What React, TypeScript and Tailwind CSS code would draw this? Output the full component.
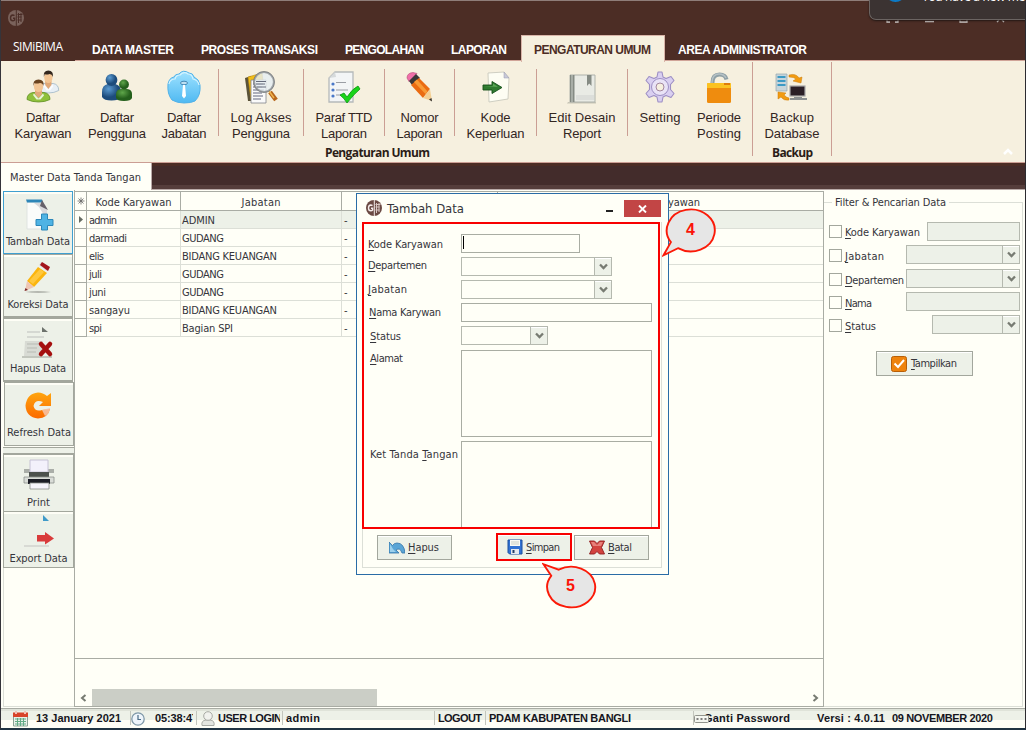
import { useLayoutEffect, useRef, type ReactNode } from "react";

const UI = "font-['DejaVu_Sans_Condensed','DejaVu_Sans',sans-serif] [font-stretch:condensed]";
const ARIAL = "font-['Liberation_Sans',Arial,sans-serif]";
const HUMANIST = "font-['Open_Sans',sans-serif] [font-stretch:normal]";

/* Text run whose tracking is adjusted so that it fills the given width. */
function Fit({ w, className = "", children }: { w: number; className?: string; children: ReactNode }) {
  const ref = useRef<HTMLSpanElement>(null);
  useLayoutEffect(() => {
    const el = ref.current;
    if (!el) return;
    const n = (el.textContent || "").length;
    el.style.letterSpacing = "0px";
    el.style.width = "auto";
    const natural = el.getBoundingClientRect().width;
    el.style.letterSpacing = `${(w - natural) / Math.max(1, n - 1)}px`;
    el.style.width = `${w}px`;
  }, [w]);
  return (
    <span ref={ref} className={`inline-block shrink-0 whitespace-pre ${className}`}>
      {children}
    </span>
  );
}

/* Label with its first letter underlined as the keyboard mnemonic. */
function Mnemonic({ text, w, className = "" }: { text: string; w: number; className?: string }) {
  return (
    <Fit w={w} className={className}>
      <span className="underline decoration-1 underline-offset-2">{text[0]}</span>
      {text.slice(1)}
    </Fit>
  );
}

const Logo = ({ dim = false, size = 16 }: { dim?: boolean; size?: number }) => (
  <svg width={size} height={size} viewBox="0 0 16 16">
    <circle cx="8" cy="8" r="8" fill={dim ? "#7a625b" : "#6b4a44"} />
    <path d="M6.500 5.600Q5.800 5 4.800 5 2.500 5.200 2.500 8T4.800 10.800Q6 10.800 6.600 10V8.200H5" fill="none" stroke={dim ? "#4a2d26" : "#f4ecea"} strokeWidth="1.400" />
    <path d="M8.300 0V16" stroke={dim ? "#4a2d26" : "#f4ecea"} strokeWidth="1" />
    <path d="M9.500 4.500h5M9.500 7h4M10.500 3v10M13 3v9M9.500 10h4" fill="none" stroke={dim ? "#4a2d26" : "#d9c8c4"} strokeWidth="1" />
  </svg>
);

function Person({ hair, shirt, edge }: { hair: string; shirt: string; edge: string }) {
  return (
    <g>
      <path d="M0 19.500Q0 13.500 6 12.500H17Q23 13.500 23 19.500Q18 22 11.500 22T0 19.500Z" fill={shirt} stroke={edge} strokeWidth=".8" />
      <path d="M8 10h7v4l-3.500 4L8 14Z" fill="#e0a878" />
      <path d="M7 13.500l4.500 5 4.500-5 1 2-3.500 4h-4L6 15Z" fill="#fff" opacity=".8" />
      <ellipse cx="11.500" cy="6.500" rx="4.600" ry="5.500" fill="#f3c594" />
      <path d="M6.500 6Q5.500-.5 11.500-.5T16.500 6Q15.500 3 13 3 9 4 7.500 3Z" fill={hair} />
    </g>
  );
}

const IcKaryawan = () => (
  <svg width="34" height="34" viewBox="0 0 34 34">
    <g transform="translate(12 1)"><g transform="scale(.9 1)"><Person hair="#33271d" shirt="#e8eff5" edge="#9bb2c4" /></g></g>
    <g transform="translate(1 10)"><Person hair="#6b4420" shirt="#8fc13c" edge="#5f8f22" /></g>
  </svg>
);
const IcPengguna = () => (
  <svg width="34" height="34" viewBox="0 0 34 34">
    <defs>
      <radialGradient id="ub" cx=".35" cy=".3"><stop offset="0" stopColor="#5b9bd2" /><stop offset="1" stopColor="#1d4c7c" /></radialGradient>
      <radialGradient id="ug" cx=".4" cy=".3"><stop offset="0" stopColor="#5fa64a" /><stop offset="1" stopColor="#245f1c" /></radialGradient>
    </defs>
    <path d="M2 22Q2 15 8 14h7Q21 15 21 22V27Q19 30.500 11.500 30.500T2 27Z" fill="url(#ub)" />
    <circle cx="11.500" cy="10" r="5.900" fill="url(#ub)" />
    <path d="M16 24Q16 19.500 21 19h6Q32 19.500 32 24v4Q31 31 24 31T16 28Z" fill="url(#ug)" />
    <circle cx="24" cy="14.500" r="4.900" fill="url(#ug)" />
  </svg>
);
const IcJabatan = () => (
  <svg width="34" height="34" viewBox="0 0 34 34">
    <defs><linearGradient id="cl" x1="0" y1="0" x2="0" y2="1"><stop offset="0" stopColor="#9fe2ff" /><stop offset="1" stopColor="#4fb9f2" /></linearGradient></defs>
    <path d="M5 30Q0 24 1 14Q2 8 7 7Q8 4 12 4Q16-1 22 3Q26 3 27 7Q32 9 33 15Q34 25 28 31Q24 33 17 33T5 30Z" fill="url(#cl)" stroke="#53b2e8" strokeWidth="1" />
    <path d="M2 14Q3 9 8 9Q9 5 13 5Q17 1 21 4Q25 4 26 9Q31 10 32 15" fill="none" stroke="#d4f3ff" strokeWidth="1.200" />
    <ellipse cx="17" cy="13" rx="3.500" ry="1.800" fill="#bcdff2" stroke="#397fae" strokeWidth=".9" />
    <path d="M16 15h2L19 26l-2 2.500-2-2.500Z" fill="#fff" />
  </svg>
);
const IcLog = () => (
  <svg width="34" height="34" viewBox="0 0 34 34">
    <path d="M1 8l6-2v25H4Z" fill="#5a5238" /><path d="M4 7l14-4 3 24-14 3Z" fill="#f2bd17" stroke="#b88a10" strokeWidth=".6" />
    <path d="M7 10h15v23H7Z" fill="#fafafa" stroke="#80848a" strokeWidth=".8" />
    <path d="M9 14h10M9 17h9M9 20h11M9 23h9M9 26h10M9 29h8" stroke="#62677f" strokeWidth="1.100" />
    <path d="M26 22l6 8" stroke="#b7651c" strokeWidth="4.500" /><path d="M25 21l5 7" stroke="#efb44e" strokeWidth="1.500" />
    <circle cx="20" cy="12" r="9.800" fill="#e5edf3" fillOpacity=".8" stroke="#a0a5a8" strokeWidth="1.800" />
    <path d="M12 14h9M12 11.500h10M13 17h9" stroke="#666c7c" />
    <circle cx="20" cy="12" r="10.500" fill="none" stroke="#57595c" strokeWidth=".5" />
  </svg>
);
const IcParaf = () => (
  <svg width="34" height="34" viewBox="0 0 34 34">
    <path d="M8 2H26V32H2V8Z" fill="#f3f5f6" stroke="#b5b9ba" strokeWidth="1.300" /><path d="M2 8l7-1-1-5Z" fill="#d6dadb" />
    <g fill="#4a78c8"><circle cx="6" cy="14" r="1.600" /><circle cx="6" cy="20" r="1.600" /><circle cx="6" cy="26" r="1.600" /></g>
    <path d="M9 12.500h10M9 20h12M9 25h6" stroke="#9a9ea4" strokeWidth="1.200" />
    <path d="M13 25l4-2 3 4Q25 19 31 16l2 3Q27 24 20 33Q17 28 13 25Z" fill="#19d419" stroke="#0b9412" strokeWidth=".8" />
  </svg>
);
const IcNomor = () => (
  <svg width="34" height="34" viewBox="0 0 34 34">
    <path d="M4 8Q4 3 10 2.500l4 1-8 8Z" fill="#ef6fa8" stroke="#b64477" strokeWidth=".6" />
    <path d="M13 4l4 4-8 7-3-4Z" fill="#3a3738" />
    <path d="M16 8l11 11-7 9L8 15Z" fill="#ea6b12" /><path d="M14 9.500l10.500 12-2 2.500L11 12Z" fill="#f89a35" />
    <path d="M20 28l7-9 2 12Z" fill="#f3cf94" /><path d="M26 29.500l2.500-1.500.5 3.500Z" fill="#333" />
  </svg>
);
const IcKode = () => (
  <svg width="34" height="34" viewBox="0 0 34 34">
    <path d="M9 3l16-1 5 6-1 21-19 3Z" fill="#fdfdf3" stroke="#c9c9bd" strokeWidth=".9" /><path d="M25 2l0 6 5 0Z" fill="#c8c9d8" stroke="#9a9ab0" strokeWidth=".5" />
    <path d="M4 15h9v-3.500l10 6-10 6v-3.500H4Z" fill="#2f7a2f" stroke="#144f18" strokeWidth=".9" /><path d="M5 16h9v-2.500l5 3.500Z" fill="#5aa655" />
  </svg>
);
const IcEdit = () => (
  <svg width="34" height="34" viewBox="0 0 34 34">
    <path d="M3 32h28v1.500H2Z" fill="#c7c5b6" />
    <path d="M5 5h25v27H5Z" fill="#e9ebe5" stroke="#aeb2ab" /><path d="M5 5h4.500v27H5Z" fill="#858b84" /><path d="M7 5v27" stroke="#cbd0ca" />
    <path d="M11 25h18v5H11Z" fill="#dcdeda" /><path d="M22 5h4.500v11l-2.300-2.500L22 16Z" fill="#858b84" />
  </svg>
);
const IcSetting = () => (
  <svg width="34" height="34" viewBox="0 0 34 34">
    <path d="M15 2h4l1 5 3 1.500 5-2 3 4-3.500 4v5l3.500 4-3 4-5-2-3 1.500-1 5h-4l-1-5-3-1.500-5 2-3-4 3.500-4v-5L3 10.500l3-4 5 2L14 7Z" fill="#d9cff0" stroke="#9d8fc4" strokeWidth="1.100" strokeLinejoin="round" />
    <circle cx="17" cy="17" r="8.500" fill="#e9e3f6" stroke="#9d8fc4" /><circle cx="17" cy="17" r="4" fill="#f6f0df" stroke="#a4889f" />
  </svg>
);
const IcPeriode = () => (
  <svg width="34" height="34" viewBox="0 0 34 34">
    <path d="M10.500 14V12.500Q10.500 4.500 17.500 4.500 23.500 4.500 24.500 9.500" fill="none" stroke="#8fa0a6" strokeWidth="4" /><path d="M10 13V12Q10.500 4 17 4 22 4 24 8" fill="none" stroke="#b5c1c5" strokeWidth="1.500" />
    <rect x="5" y="13" width="24" height="20" rx="1.500" fill="#ef8c0e" /><path d="M5 14Q5 13 6 13H28Q29 13 29 14v4H5Z" fill="#fbc221" /><path d="M22 13h6v2h-6Z" fill="#e07c08" />
  </svg>
);
const IcBackup = () => (
  <svg width="34" height="34" viewBox="0 0 34 34">
    <path d="M1 4h11v17H1Z" fill="#c7d5da" stroke="#97a7ac" strokeWidth=".7" />
    <path d="M2.500 7h8M2.500 11h8M2.500 15h8" stroke="#3c9ac4" strokeWidth="1.800" />
    <path d="M14 5Q21 3 24 8l3-1-1 6-8-2 3-2Q19 7 14 7Z" fill="#f29b11" stroke="#c97a08" strokeWidth=".5" />
    <rect x="15" y="16" width="15" height="10" fill="#2b1f26" stroke="#a8a8a8" strokeWidth="1.200" /><path d="M19 27h8v1h5v2H15v-2h4Z" fill="#8d9192" />
    <path d="M3 22l8 1-2 2q3 3 5 3v2Q9 31 6 27l-3 2Z" fill="#f29b11" stroke="#c97a08" strokeWidth=".5" />
  </svg>
);

type Tool = { icon: ReactNode; lines: [string, number][]; box: string };
function RibbonItem({ icon, lines, box }: Tool) {
  return (
    <div className={`flex shrink-0 flex-col items-center pt-[9px] ${box}`}>
      {icon}
      <div className={`mt-[6px] flex flex-col items-center text-[13px] leading-4 text-[#33261f] ${ARIAL}`}>
        {lines.map(([t, w]) => <Fit key={t} w={w}>{t}</Fit>)}
      </div>
    </div>
  );
}
const Sep = () => <div className="mt-2 h-[67px] w-px shrink-0 bg-[#cb9e94]" />;
const TallSep = () => <div className="mt-px h-[94px] w-px shrink-0 bg-[#cb9e94]" />;

function Ribbon() {
  return (
    <div className="relative flex h-[101px] shrink-0 bg-[#f6f0df]">
      <RibbonItem box="ml-[5px] w-[74px]" icon={<IcKaryawan />} lines={[["Daftar", 34], ["Karyawan", 57]]} />
      <RibbonItem box="w-[74px]" icon={<IcPengguna />} lines={[["Daftar", 34], ["Pengguna", 58]]} />
      <RibbonItem box="mr-1 w-[60px]" icon={<IcJabatan />} lines={[["Daftar", 34], ["Jabatan", 45]]} />
      <Sep />
      <RibbonItem box="w-[84px]" icon={<IcLog />} lines={[["Log Akses", 61], ["Pengguna", 58]]} />
      <Sep />
      <RibbonItem box="w-[80px]" icon={<IcParaf />} lines={[["Paraf TTD", 57], ["Laporan", 46]]} />
      <Sep />
      <RibbonItem box="w-[69px]" icon={<IcNomor />} lines={[["Nomor", 38], ["Laporan", 46]]} />
      <Sep />
      <RibbonItem box="w-[81px]" icon={<IcKode />} lines={[["Kode", 30], ["Keperluan", 58]]} />
      <Sep />
      <RibbonItem box="w-[90px]" icon={<IcEdit />} lines={[["Edit Desain", 67], ["Report", 38]]} />
      <Sep />
      <RibbonItem box="w-[64px]" icon={<IcSetting />} lines={[["Setting", 41]]} />
      <RibbonItem box="mr-[6px] w-[54px]" icon={<IcPeriode />} lines={[["Periode", 44], ["Posting", 44]]} />
      <TallSep />
      <RibbonItem box="w-[78px]" icon={<IcBackup />} lines={[["Backup", 44], ["Database", 55]]} />
      <TallSep />
      <div className={`absolute left-[324px] top-[84px] text-[12px] font-bold leading-4 text-[#2b1d17] ${HUMANIST}`}><Fit w={105}>Pengaturan Umum</Fit></div>
      <div className={`absolute left-[771px] top-[84px] text-[12px] font-bold leading-4 text-[#2b1d17] ${HUMANIST}`}><Fit w={41}>Backup</Fit></div>
      <svg className="absolute left-[1001px] top-[86px]" width="12" height="9" viewBox="0 0 12 9"><path d="M2 7l4-4 4 4" fill="none" stroke="#fff" strokeWidth="2.500" /></svg>
    </div>
  );
}

function Header() {
  return (
    <div className="relative flex h-[60px] shrink-0 flex-col border-t border-[#8f7d79] bg-[#4c2d25]">
      <div className="flex h-[34px] pl-[7px] pt-[9px]"><Logo dim /></div>
      <div className={`flex h-[25px] items-start text-[12px] font-bold text-white ${ARIAL}`}>
        <Fit w={50} className={`ml-[12px] mt-[4px] text-[12px] font-normal leading-4 ${HUMANIST}`}>SIMiBIMA</Fit>
        <div className="ml-[29px] mt-[7px] flex gap-[27px] leading-4">
          <Fit w={82}>DATA MASTER</Fit><Fit w={117}>PROSES TRANSAKSI</Fit><Fit w={79}>PENGOLAHAN</Fit><Fit w={56}>LAPORAN</Fit>
        </div>
        <div className="relative z-10 ml-[14px] h-[27px] w-[144px] shrink-0 border border-b-0 border-[#d9b5a9] bg-[#f6f0df] pl-[12px] pt-[6px] leading-4 text-[#4c2d25]"><Fit w={117}>PENGATURAN UMUM</Fit></div>
        <Fit w={129} className="ml-[13px] mt-[7px] leading-4">AREA ADMINISTRATOR</Fit>
      </div>
      <div className="absolute right-0 top-[18px] flex w-[144px] gap-[28px] pl-[5px] text-white">
        <svg width="120" height="5" viewBox="0 0 120 5"><path d="M1 1v2h3M9 3h3V1M39 2.500h9M74 1v2h7V1M111 3l2-2M118 3l-2-2" fill="none" stroke="#d9d4d2" strokeWidth="1.300" /></svg>
      </div>
      <div className="absolute -right-[1px] -top-[1px] h-[20px] w-[157px] overflow-hidden rounded-bl-[7px] border-b border-l border-[#6b6462] bg-[#3b3332] shadow-[0_1px_2px_#221815]">
        <div className="absolute left-[15px] top-[-19px] h-[21px] w-[21px] rounded-full bg-[#0c7ac6]" />
        <div className={`absolute left-[52px] top-[-11px] text-[12px] leading-4 text-white ${HUMANIST}`}><Fit w={133}>You have a new message</Fit></div>
      </div>
    </div>
  );
}

const IcTambah = () => (
  <svg width="32" height="34" viewBox="0 0 32 34">
    <path d="M5 4H20l4 7V31H5Z" fill="#fbfcfa" stroke="#dfe3e1" /><path d="M4 1.500H20l1 3H5Z" fill="#2e86b8" /><path d="M12 5h8l5 7v10L17 9Z" fill="#d9d9dc" /><path d="M20 2l6 10-8-4Z" fill="#66616a" />
    <path d="M19.500 16h6v5.500H31v6h-5.500V32h-6v-4.500H14v-6h5.500Z" fill="#4fb3e4" stroke="#2c87b9" />
  </svg>
);
const IcKoreksi = () => (
  <svg width="32" height="34" viewBox="0 0 32 34">
    <path d="M3 31q12-2 26 0-12 2-26 0Z" fill="#b5b8b0" /><path d="M17 4l8 6 2-4-8-5Z" fill="#d9d9de" /><path d="M20 1l8 5-2 4-8-6Z" fill="#a3141c" />
    <path d="M16 6l9 6L12 26 5 20Z" fill="#fbb50e" /><path d="M18 8l4 3L11 23l-4-3Z" fill="#ffc83e" /><path d="M5 20l7 6-9 4Z" fill="#eec6b3" /><path d="M3.500 27l2.500 2-3.500 1Z" fill="#7a2727" />
  </svg>
);
const IcHapus = () => (
  <svg width="32" height="34" viewBox="0 0 32 34">
    <path d="M20 2v5h6Z" fill="#6d726c" /><path d="M5 7h13M5 12h17" stroke="#cdd0ca" strokeWidth="1.500" />
    <path d="M3 16h18v15H2Z" fill="#d8dbd4" /><path d="M5 19h14M5 23h10M5 27h9" stroke="#b8bbb4" /><path d="M0 32h30" stroke="#b3b7af" strokeWidth="1.500" />
    <path d="M19 19l9 10M28 19L19 29" stroke="#a5100f" strokeWidth="4.500" strokeLinecap="round" />
  </svg>
);
const IcRefresh = () => (
  <svg width="32" height="34" viewBox="0 0 32 34">
    <defs><linearGradient id="rf" x1="0" y1="0" x2="0" y2="1"><stop offset="0" stopColor="#ffa50f" /><stop offset="1" stopColor="#fb6a00" /></linearGradient></defs>
    <path d="M28 4v13H16l4-4Q12 10 10.500 17 12 23 19 21L27 20Q25 29 15 29.500 3 28 2.500 16.500 4 4.500 15 3.500 20 3.500 24 7Z" fill="url(#rf)" />
    <path d="M19 21l8-2Q27 24 22 27Z" fill="#f6c5ae" opacity=".85" />
  </svg>
);
const IcPrint = () => (
  <svg width="32" height="32" viewBox="0 0 32 32">
    <path d="M1 10h30v4H1Z" fill="#aaaea8" /><path d="M7 1h18v12H7Z" fill="#f3f1fb" stroke="#c6c2d5" /><path d="M6 13h20v5H6Z" fill="#4c514d" />
    <path d="M1 18h30v6H1Z" fill="#d9dcd7" stroke="#8b908b" strokeWidth=".8" /><path d="M5 20h22v5H5Z" fill="#1b1d26" /><path d="M7 24h19v6H7Z" fill="#f5f4fc" stroke="#8b908b" strokeWidth=".8" />
  </svg>
);
const IcExport = () => (
  <svg width="32" height="34" viewBox="0 0 32 34">
    <path d="M20 1v6h6Z" fill="#3f9ac9" /><path d="M1 32h25" stroke="#c9ccc6" strokeWidth="1.200" /><path d="M14 21h8v-3l9 6.500-9 6v-3h-8Z" fill="#d93b3b" />
  </svg>
);

function SideButton({ icon, text, w, box, line = "border-[#a3a79d]" }: { icon: ReactNode; text: string; w: number; box: string; line?: string }) {
  return (
    <div className={`flex shrink-0 flex-col items-center justify-between border bg-[#edf1e8] shadow-[inset_0_2px_0_#fefef6] ${line} ${box}`}>
      {icon}
      <Fit w={w} className="leading-[14px]">{text}</Fit>
    </div>
  );
}

function Sidebar() {
  return (
    <div className="flex w-[74px] shrink-0 flex-col border-r border-[#a9aca4] pl-[2px] pt-px">
      <SideButton box="h-[63px] w-[70px] pb-[4px] pt-[6px]" line="border-[#3f9fd0]" icon={<IcTambah />} text="Tambah Data" w={64} />
      <SideButton box="h-[64px] w-[70px] pb-[4px] pt-[6px] border-b-2" icon={<IcKoreksi />} text="Koreksi Data" w={61} />
      <SideButton box="h-[64px] w-[70px] pb-[4px] pt-[6px] border-b-2" icon={<IcHapus />} text="Hapus Data" w={56} />
      <SideButton box="ml-px h-[64px] w-[70px] pb-[5px] pt-[6px]" icon={<IcRefresh />} text="Refresh Data" w={64} />
      <div className="mt-px h-[8px] w-[71px] border-b-2 border-t border-[#a3a79d] bg-[#edf1e8]" />
      <SideButton box="h-[57px] w-[71px] border-t-0 pb-px pt-[4px]" icon={<IcPrint />} text="Print" w={23} />
      <SideButton box="h-[56px] w-[71px] border-t-0 pb-px pt-[2px]" icon={<IcExport />} text="Export Data" w={58} />
      <div className="grow border-b border-l border-[#dcdfd7]" />
    </div>
  );
}

const rows: [string, number, string, number][] = [
  ["admin", 28, "ADMIN", 33], ["darmadi", 38, "GUDANG", 42], ["elis", 15, "BIDANG KEUANGAN", 95], ["juli", 13, "GUDANG", 42],
  ["juni", 17, "GUDANG", 42], ["sangayu", 41, "BIDANG KEUANGAN", 95], ["spi", 13, "Bagian SPI", 51],
];

function Grid() {
  return (
    <div className="flex w-[749px] shrink-0 flex-col pt-px">
      <div className="flex h-[20px] shrink-0 border-b border-t border-[#a9aca4] text-center leading-[21px]">
        <div className="flex w-[12px] items-center justify-center border-r border-[#a9aca4]">
          <svg width="8" height="8" viewBox="0 0 8 8"><path d="M4 .5v7M.5 4h7M1.500 1.500l5 5M6.500 1.500l-5 5" stroke="#666" strokeWidth=".8" /></svg>
        </div>
        <div className="w-[94px] border-r border-[#a9aca4]"><Fit w={76}>Kode Karyawan</Fit></div>
        <div className="w-[161px] border-r border-[#a9aca4]"><Fit w={39}>Jabatan</Fit></div>
        <div className="w-[156px] border-r border-[#a9aca4]" />
        <div className="flex w-[326px] justify-end border-r border-[#a9aca4] pr-[123px]"><Fit w={80}>Nama Karyawan</Fit></div>
      </div>
      {rows.map(([kode, kw, jab, jw], i) => (
        <div key={kode} className="flex h-[18px] shrink-0 leading-[19px]">
          <div className="flex w-[12px] items-center justify-center border-b border-r border-[#a9aca4]">
            {i === 0 && <svg width="4" height="7" viewBox="0 0 4 7"><path d="M0 0l4 3.500L0 7Z" fill="#666b62" /></svg>}
          </div>
          <div className="w-[94px] border-b border-r border-[#dcdfd7] pl-[2px]"><Fit w={kw}>{kode}</Fit></div>
          <div className={`flex w-[642px] border-b border-[#dcdfd7] ${i === 0 ? "bg-[#edf1e8]" : ""}`}>
            <div className="w-[161px] border-r border-[#dcdfd7] pl-px"><Fit w={jw}>{jab}</Fit></div>
            <div className="pl-[2px]">-</div>
          </div>
          <div className="w-px bg-[#a9aca4]" />
        </div>
      ))}
      <div className="h-[321px] shrink-0 border-r border-[#a9aca4]" />
      <div className="flex grow flex-col justify-end border-b border-r border-t border-[#a9aca4]">
        <div className="flex h-[17px] items-center">
          <svg className="ml-[5px]" width="7" height="8" viewBox="0 0 7 8"><path d="M5.500 1L2 4l3.500 3" fill="none" stroke="#777b72" strokeWidth="2" /></svg>
          <div className="ml-[5px] h-[17px] w-[285px] bg-[#cbcec6]" />
          <svg className="ml-auto mr-[4px]" width="7" height="8" viewBox="0 0 7 8"><path d="M1.500 1L5 4 1.500 7" fill="none" stroke="#777b72" strokeWidth="2" /></svg>
        </div>
      </div>
    </div>
  );
}

/* Drop-down field; `box` gives its width and margins. */
function Combo({ box, fill = "" }: { box: string; fill?: string }) {
  return (
    <div className={`flex h-[19px] shrink-0 justify-end border border-[#b5b9af] ${fill} ${box}`}>
      <div className="flex w-[17px] items-center justify-center border-l border-[#b5b9af] bg-[#edf1e8] shadow-[inset_0_1px_0_#fff]">
        <svg width="9" height="7" viewBox="0 0 9 7"><path d="M1 1.500l3.500 3.500 3.500-3.500" fill="none" stroke="#777b72" strokeWidth="2.300" /></svg>
      </div>
    </div>
  );
}
const Check = () => <div className="mt-[3px] h-[13px] w-[13px] shrink-0 border border-[#a3a79d]" />;

function FilterPanel() {
  const label = "ml-[3px] mt-[4px] leading-[14px]";
  return (
    <div className="relative w-[200px] shrink-0">
      <div className="mt-[12px] h-[505px] w-[199px] border border-l-0 border-[#dcdfd7]" />
      <div className="absolute left-[8px] top-[6px] bg-[#fffff7] px-[3px] leading-[14px]"><Fit w={111}>Filter &amp; Pencarian Data</Fit></div>
      <div className="absolute left-[5px] top-[32px] flex w-[191px] flex-col">
        <div className="flex h-[24px] items-start"><Check /><Mnemonic text="Kode Karyawan" w={75} className={label} /><div className="ml-auto h-[19px] w-[93px] border border-[#b5b9af] bg-[#edf1e8]" /></div>
        <div className="flex h-[24px] items-start"><Check /><Mnemonic text="Jabatan" w={39} className={label} /><Combo box="-mt-px ml-auto w-[114px]" fill="bg-[#edf1e8]" /></div>
        <div className="flex h-[23px] items-start"><Check /><Mnemonic text="Departemen" w={59} className={label} /><Combo box="-mt-px ml-auto w-[114px]" fill="bg-[#edf1e8]" /></div>
        <div className="flex h-[23px] items-start"><Check /><Mnemonic text="Nama" w={27} className={label} /><div className="-mt-px ml-auto h-[19px] w-[114px] border border-[#b5b9af] bg-[#edf1e8]" /></div>
        <div className="flex h-[35px] items-start"><Check /><Mnemonic text="Status" w={31} className={label} /><Combo box="-mt-px ml-auto w-[88px]" fill="bg-[#edf1e8]" /></div>
        <div className="ml-[47px] flex h-[25px] w-[97px] items-center border border-[#a3a79d] bg-[#edf1e8] pl-[14px] shadow-[inset_0_1px_0_#fff]">
          <svg width="16" height="16" viewBox="0 0 16 16"><rect x=".5" y=".5" width="15" height="15" rx="2" fill="#ee830d" stroke="#b85f08" /><path d="M3.500 7.500l3.500 3.500 6-7" fill="none" stroke="#fff" strokeWidth="2" /></svg>
          <Mnemonic text="Tampilkan" w={46} className="ml-[4px] leading-[14px]" />
        </div>
      </div>
    </div>
  );
}

function StatusBar() {
  const bar = "h-[14px] w-px shrink-0 bg-[#c3c6bd]";
  return (
    <div className={`flex h-[20px] shrink-0 items-start border-t border-[#a9aca4] bg-[linear-gradient(#dfe3d9_0_2px,#edf1e8_2px_11px,#fefef6_11px)] pt-[2px] text-[11px] font-bold leading-[15px] text-[#15151d] ${ARIAL}`}>
      <svg className="ml-[12px] shrink-0" width="15" height="16" viewBox="0 0 15 16"><path d="M.5 5h14v10H.5Z" fill="#e9f0ea" stroke="#8aa294" /><path d="M0 1.500h15V6H0Z" fill="#d8442b" /><path d="M3 0v3M12 0v3" stroke="#f2c2b7" strokeWidth="2" /><path d="M2 8h11M2 10.500h11M2 13h11M4.500 7v8M7.500 7v8M10.500 7v8" stroke="#63ab86" /></svg>
      <Fit w={85} className="ml-[8px]">13 January 2021</Fit>
      <div className={`${bar} ml-[9px]`} />
      <svg className="mt-px shrink-0" width="14" height="14" viewBox="0 0 14 14"><circle cx="7" cy="7" r="6.200" fill="#eef5fb" stroke="#7f98a8" strokeWidth="1.300" /><path d="M7 3v4.500h3" fill="none" stroke="#496b86" strokeWidth="1.200" /></svg>
      <div className="ml-[10px] w-[38px] shrink-0 overflow-hidden"><Fit w={43}>05:38:47</Fit></div>
      <div className={`${bar} ml-[3px]`} />
      <svg className="ml-[4px] shrink-0" width="14" height="15" viewBox="0 0 14 15"><path d="M1 14.500q-1-5 4-5.500h4q5 .5 4 5.500Z" fill="#e4e6e0" stroke="#a8aaa4" /><circle cx="7" cy="5" r="4.300" fill="#f1f2ee" stroke="#a8aaa4" /></svg>
      <div className="ml-[3px] w-[62px] shrink-0 overflow-hidden"><Fit w={64}>USER LOGIN</Fit></div>
      <div className={`${bar} ml-[2px]`} />
      <Fit w={34} className="ml-[3px]">admin</Fit>
      <div className={`${bar} ml-[114px]`} />
      <Fit w={44} className="ml-[3px]">LOGOUT</Fit>
      <div className={`${bar} ml-[3px]`} />
      <Fit w={142} className="ml-[3px]">PDAM KABUPATEN BANGLI</Fit>
      <div className={`${bar} ml-[62px]`} />
      <div className="relative ml-[10px] shrink-0"><Fit w={86}>Ganti Password</Fit>
        <svg className="absolute -left-[10px] top-[4px]" width="15" height="8" viewBox="0 0 15 8"><rect x=".5" y=".5" width="14" height="7" rx="1" fill="#f5f7f0" stroke="#92958d" /><path d="M2.500 4h2M6.500 4h2M10.500 4h2" stroke="#555" strokeWidth="1.500" /></svg>
      </div>
      <Fit w={68} className="ml-[27px]">Versi : 4.0.11</Fit>
      <Fit w={101} className="ml-[7px]">09 NOVEMBER 2020</Fit>
    </div>
  );
}

const field = "shrink-0 border border-[#a9ada3]";
function DialogButton({ icon, text, w, box }: { icon: ReactNode; text: string; w: number; box: string }) {
  return (
    <div className={`flex shrink-0 items-center bg-[#edf1e8] shadow-[inset_0_1px_0_#fff] ${box}`}>
      {icon}
      <Mnemonic text={text} w={w} className="ml-[3px] mt-px leading-[14px]" />
    </div>
  );
}

function Dialog() {
  return (
    <div className="absolute left-[356px] top-[193px] flex h-[382px] w-[313px] flex-col border border-[#2a6ca6] bg-[#fffff7]">
      <div className="flex h-[28px] shrink-0 items-start pl-[9px] pt-[6px] text-[13px]">
        <Logo />
        <Fit w={77} className="ml-[5px] leading-[18px]">Tambah Data</Fit>
        <div className="ml-[142px] mt-[10px] h-[2px] w-[7px] shrink-0 bg-[#222]" />
        <div className="ml-[11px] flex h-[17px] w-[37px] shrink-0 items-center justify-center bg-[#c24545]">
          <svg width="9" height="8" viewBox="0 0 9 8"><path d="M1 .5l7 7M8 .5l-7 7" stroke="#fff" strokeWidth="1.900" /></svg>
        </div>
      </div>
      <div className="ml-[5px] flex h-[346px] w-[300px] flex-col border-b border-l border-r border-[#dcdfd7]">
        <div className="-ml-px flex h-[307px] w-[298px] shrink-0 flex-col overflow-hidden border-2 border-[#f80000] pl-[4px] pt-[10px]">
          <div className="flex h-[23px] shrink-0 items-start"><Mnemonic text="Kode Karyawan" w={75} className="mr-[18px] mt-[4px] leading-[14px]" /><div className={`${field} h-[19px] w-[119px] pl-px pt-px`}><div className="h-[13px] w-px bg-black" /></div></div>
          <div className="flex h-[23px] shrink-0 items-start"><Mnemonic text="Departemen" w={59} className="mr-[34px] mt-[2px] leading-[14px]" /><Combo box="w-[151px]" /></div>
          <div className="flex h-[23px] shrink-0 items-start"><Mnemonic text="Jabatan" w={39} className="mr-[54px] mt-[3px] leading-[14px]" /><Combo box="w-[151px]" /></div>
          <div className="flex h-[23px] shrink-0 items-start"><Mnemonic text="Nama Karywan" w={72} className="ml-px mr-[20px] mt-[3px] leading-[14px]" /><div className={`${field} h-[19px] w-[191px]`} /></div>
          <div className="flex h-[24px] shrink-0 items-start"><Mnemonic text="Status" w={31} className="ml-[2px] mr-[60px] mt-[4px] leading-[14px]" /><Combo box="w-[87px]" /></div>
          <div className="flex h-[91px] shrink-0 items-start"><Mnemonic text="Alamat" w={33} className="ml-[2px] mr-[58px] mt-[2px] leading-[14px]" /><div className={`${field} h-[87px] w-[191px]`} /></div>
          <div className="flex h-[91px] shrink-0 items-start">
            <Fit w={88} className="ml-[2px] mr-[3px] mt-[7px] leading-[14px]">Ket Tanda <span className="underline decoration-1 underline-offset-2">T</span>angan</Fit>
            <div className={`${field} h-[95px] w-[191px]`} />
          </div>
        </div>
        <div className="mt-[4px] flex h-[28px] items-center pl-[14px]">
          <DialogButton box="h-[25px] w-[75px] border border-[#a3a79d] pl-[11px]" text="Hapus" w={31} icon={
            <svg width="16" height="14" viewBox="0 0 16 14"><path d="M0 2v11h10L7 10Q11 7 13 13h3Q15 3 8 3 5 3 3.500 5.500Z" fill="#5aa5d6" stroke="#3375a8" strokeWidth=".8" /><path d="M1 4v8h6l-3-3Z" fill="#9cd0ec" /></svg>} />
          <DialogButton box="ml-[44px] h-[28px] w-[76px] border-2 border-[#f80000] pl-[9px]" text="Simpan" w={34} icon={
            <svg width="16" height="16" viewBox="0 0 16 16"><path d="M1 1h14v14H2.500L1 13.500Z" fill="#3272d3" stroke="#1b4f9e" /><path d="M3 1h10v6H3Z" fill="#fafaf5" /><path d="M4 3h8M4 5h8" stroke="#c9cfc5" /><path d="M4 10h8v5H4Z" fill="#e5e9ee" /><path d="M5.500 11h2v3h-2Z" fill="#243d66" /></svg>} />
          <DialogButton box="ml-[2px] h-[25px] w-[75px] border border-[#a3a79d] pl-[14px]" text="Batal" w={24} icon={
            <svg width="16" height="15" viewBox="0 0 16 15"><path d="M.5 1h5L8 3.500 10.500 1h5L12.500 7.500l3 6.500h-5L8 11.500 5.500 14h-5l3-6.500Z" fill="#d2433f" stroke="#8e1d20" strokeWidth=".9" /><path d="M2 2h3l3 3 3-3h3l-2 4H4Z" fill="#ee9a94" opacity=".7" /></svg>} />
        </div>
      </div>
      <svg className="absolute left-[305px] top-[12px]" width="58" height="54" viewBox="0 0 58 54">
        <path d="M1.500 49.300L8.900 36.200A24 21 0 1 1 16 42.200Z" fill="#e6e6e6" stroke="#fb1a08" strokeWidth="1.900" />
      </svg>
      <div className={`absolute left-[329px] top-[27px] text-[16px] font-bold leading-[18px] text-[#fb1408] ${ARIAL}`}>4</div>
      <svg className="absolute left-[185px] top-[367px]" width="58" height="50" viewBox="0 0 58 50">
        <path d="M1.500 3.200L9.200 14.800A24 20.300 0 1 0 16.700 8.700Z" fill="#e6e6e6" stroke="#fb1a08" strokeWidth="1.900" />
      </svg>
      <div className={`absolute left-[209px] top-[383px] text-[16px] font-bold leading-[18px] text-[#fb1408] ${ARIAL}`}>5</div>
    </div>
  );
}

export default function App() {
  return (
    <div className={`relative flex h-[730px] w-[1026px] flex-col overflow-hidden border-b-2 border-l border-r border-b-[#1f3342] border-l-[#35343a] border-r-[#2c2b30] bg-[#fffff7] text-[11px] text-[#35353b] ${UI}`}>
      <Header />
      <div className="h-px shrink-0 bg-[linear-gradient(90deg,#4c2d25_74px,#d0a498_74px)]" />
      <Ribbon />
      <div className="flex h-[28px] shrink-0 border-t border-[#cb9e94] bg-[linear-gradient(#4c2d25_0_3px,#432c2b_3px_22px,#553d3b_22px_26px,#b9aaa8_26px)]">
        <div className="w-[151px] border-r border-[#b9aaa8] bg-[#fffff7] pl-[9px] pt-[8px] leading-[14px]"><Fit w={131}>Master Data Tanda Tangan</Fit></div>
      </div>
      <div className="flex h-[517px] shrink-0">
        <Sidebar />
        <Grid />
        <FilterPanel />
      </div>
      <div className="h-px shrink-0" />
      <StatusBar />
      <div className="absolute left-[-1px] top-0"><Dialog /></div>
    </div>
  );
}
